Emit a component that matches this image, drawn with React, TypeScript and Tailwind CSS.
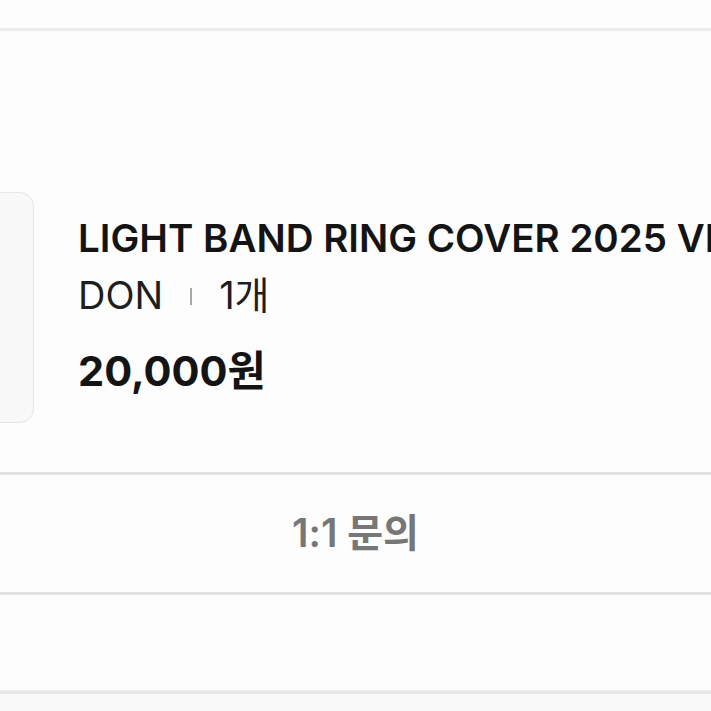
import React from "react";

export default function App() {
  const font = { fontFamily: "Inter, 'Noto Sans CJK KR', sans-serif" };
  return (
    <div className="w-[711px] h-[711px] overflow-hidden bg-[#fdfdfd]" style={font}>
      <div className="h-[28px]" />
      <div className="h-[3px] bg-[#ececec]" />
      <div className="h-[441px] pt-[161px] flex items-start overflow-hidden">
        <div className="shrink-0 ml-[-197px] w-[231px] h-[231px] rounded-[14px] border border-[#e6e6e6] bg-[#f8f8f8]" />
        <div className="ml-[44px] pt-[24px] flex flex-col min-w-0">
          <div className="text-[38.5px] leading-[44px] font-semibold text-[#141414] whitespace-nowrap">
            LIGHT BAND RING COVER 2025 VER
          </div>
          <div className="mt-[13px] flex items-center text-[38px] leading-[44px] text-[#1e1e1e] whitespace-nowrap">
            <span>DON</span>
            <span className="ml-[27px] mr-[27px] w-[2px] h-[17px] bg-[#a8a8a8] mt-[2px]" />
            <span>1개</span>
          </div>
          <div className="mt-[32px] text-[41.5px] leading-[44px] font-bold text-[#141414] whitespace-nowrap">
            20,000원
          </div>
        </div>
      </div>
      <div className="h-[3px] bg-[#e2e2e2]" />
      <div className="h-[117px] flex items-center justify-center">
        <span className="text-[39px] font-semibold text-[#777777]">1:1 문의</span>
      </div>
      <div className="h-[3px] bg-[#e2e2e2]" />
      <div className="h-[95px]" />
      <div className="h-[1px] bg-[#f0f0f0]" />
      <div className="h-[3px] bg-[#e8e8e8]" />
      <div className="h-[20px] bg-[#f9f9f9]" />
    </div>
  );
}
